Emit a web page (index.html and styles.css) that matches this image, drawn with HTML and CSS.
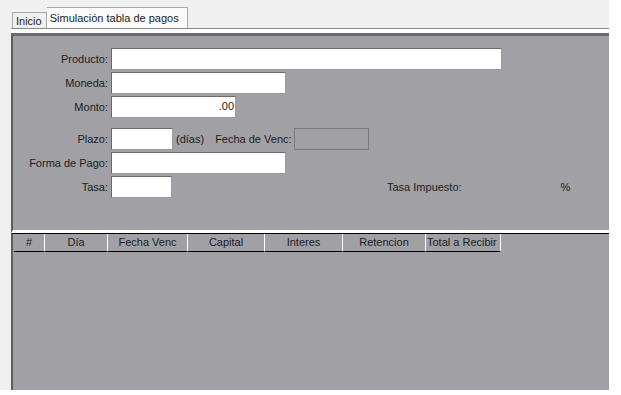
FILE: index.html
```html
<!DOCTYPE html>
<html lang="es">
<head>
<meta charset="UTF-8">
<title>Simulación tabla de pagos</title>
<link rel="stylesheet" href="styles.css">
</head>
<body>
<div class="window">
  <div class="tabbar">
    <div class="tab">Inicio</div>
    <div class="tab active">Simulación tabla de pagos</div>
  </div>

  <div class="frame">
    <div class="upper">
      <div class="row">
        <label class="lbl">Producto:</label>
        <div class="field w-producto"></div>
      </div>
      <div class="row">
        <label class="lbl">Moneda:</label>
        <div class="field w-moneda"></div>
      </div>
      <div class="row">
        <label class="lbl">Monto:</label>
        <div class="field w-monto num">.00</div>
      </div>
      <div class="row spaced">
        <label class="lbl">Plazo:</label>
        <div class="field w-plazo"></div>
        <span class="txt dias">(días)</span>
        <span class="txt venc">Fecha de Venc:</span>
        <div class="field disabled w-venc"></div>
      </div>
      <div class="row">
        <label class="lbl">Forma de Pago:</label>
        <div class="field w-moneda"></div>
      </div>
      <div class="row">
        <label class="lbl">Tasa:</label>
        <div class="field w-tasa"></div>
        <span class="txt impuesto">Tasa Impuesto:</span>
        <span class="txt pct">%</span>
      </div>
    </div>

    <div class="lower">
      <div class="grid-head">
        <div class="col c-num">#</div>
        <div class="col c-dia">Día</div>
        <div class="col c-fecha">Fecha Venc</div>
        <div class="col c-capital">Capital</div>
        <div class="col c-interes">Interes</div>
        <div class="col c-ret">Retencion</div>
        <div class="col c-total">Total a Recibir</div>
      </div>
    </div>
  </div>
</div>
</body>
</html>
```

FILE: styles.css
```css
* {
  margin: 0;
  padding: 0;
  box-sizing: border-box;
}

body {
  background: #fff;
  font-family: "Liberation Sans", Arial, sans-serif;
  font-size: 11px;
  color: #1c1c1c;
}

.window {
  width: 609px;
  height: 390px;
  background: #f0f0f0;
  display: flex;
  flex-direction: column;
}

/* Tabs */
.tabbar {
  height: 28px;
  display: flex;
  align-items: flex-end;
  padding-left: 12px;
}

.tab {
  height: 16px;
  padding: 1px 4px 0 3px;
  border: 1px solid #a9a9a9;
  border-bottom: none;
  background: #f0f0f0;
  line-height: 14px;
}

.tab.active {
  height: 21px;
  padding: 3px 8px 0 3px;
  border-left: none;
  background: #fbfbfb;
}

/* Frame under the tabs */
.frame {
  flex: 1;
  margin-left: 11px;
  border-top: 1px solid #8a8a8a;
  padding-top: 4px;
  background: #fff;
  display: flex;
  flex-direction: column;
}

.upper {
  height: 200px;
  background: #a1a0a5;
  border-top: 3px solid #6c6c6c;
  border-left: 2px solid #5e5e5e;
  border-bottom: 3px solid #fff;
  padding-top: 12px;
  display: flex;
  flex-direction: column;
  gap: 2px;
}

.row {
  display: flex;
  align-items: center;
  height: 22px;
}

.row.spaced {
  margin-top: 8px;
}

.lbl {
  width: 95px;
  margin-right: 3px;
  text-align: right;
}

.field {
  height: 22px;
  background: #fff;
  border: 1px solid #6a6a6a;
  border-right-color: #9c9c9c;
  border-bottom-color: #9c9c9c;
}

.field.num {
  text-align: right;
  line-height: 19px;
  padding-right: 1px;
}

.field.disabled {
  background: #a1a0a5;
  border-color: #7a7a7a;
}

.w-producto { width: 391px; }
.w-moneda { width: 175px; }
.w-monto { width: 125px; }
.w-plazo { width: 62px; }
.w-tasa { width: 61px; }
.w-venc { width: 75px; }

.txt.dias { margin-left: 3px; }
.txt.venc { margin-left: 11px; margin-right: 2px; }
.txt.impuesto { margin-left: 215px; }
.txt.pct { margin-left: 99px; }

/* Lower grid */
.lower {
  flex: 1;
  background: #a1a0a5;
  border-left: 2px solid #5e5e5e;
  border-top: 1px solid #000;
  padding-left: 1px;
}

.grid-head {
  display: flex;
  height: 18px;
}

.col {
  height: 18px;
  border-right: 1px solid #fff;
  border-bottom: 1px solid #000;
  text-align: center;
  line-height: 16px;
}

.c-num { width: 31px; }
.c-dia { width: 63px; }
.c-fecha { width: 80px; }
.c-capital { width: 77px; }
.c-interes { width: 78px; }
.c-ret { width: 83px; }
.c-total {
  width: 75px;
  text-align: left;
  padding-left: 1px;
}
```
